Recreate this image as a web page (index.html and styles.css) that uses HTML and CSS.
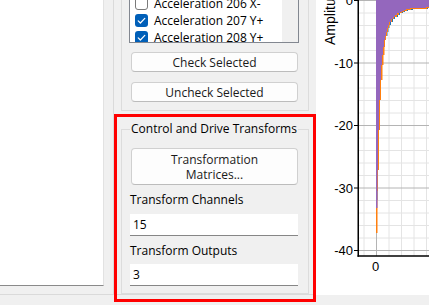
FILE: index.html
```html
<!DOCTYPE html>
<html>
<head>
<meta charset="utf-8">
<link rel="stylesheet" href="styles.css">
</head>
<body>
<div class="app">
  <div class="workspace">
    <div class="left-pane">
      <div class="tree"></div>
    </div>
    <div class="sidebar">
      <div class="group group-channels">
        <div class="listbox">
          <div class="list-items">
            <div class="item"><span class="cb"></span><span>Acceleration 206 X-</span></div>
            <div class="item"><span class="cb checked"><svg viewBox="0 0 13 13" width="13" height="13"><path d="M3.2 6.8 L5.4 9 L9.8 4.4" fill="none" stroke="#fff" stroke-width="1.2" stroke-linecap="round" stroke-linejoin="round"/></svg></span><span>Acceleration 207 Y+</span></div>
            <div class="item"><span class="cb checked"><svg viewBox="0 0 13 13" width="13" height="13"><path d="M3.2 6.8 L5.4 9 L9.8 4.4" fill="none" stroke="#fff" stroke-width="1.2" stroke-linecap="round" stroke-linejoin="round"/></svg></span><span>Acceleration 208 Y+</span></div>
          </div>
          <div class="scrolltrack"></div>
        </div>
        <button class="btn">Check Selected</button>
        <button class="btn btn-gap">Uncheck Selected</button>
      </div>
      <fieldset class="group group-transforms">
        <legend>Control and Drive Transforms</legend>
        <button class="btn btn-tall">Transformation<br>Matrices...</button>
        <label class="field-label">Transform Channels</label>
        <input class="field field-first" type="text" value="15">
        <label class="field-label">Transform Outputs</label>
        <input class="field field-second" type="text" value="3">
      </fieldset>
    </div>
    <div class="plot">
      <svg class="chart" width="113" height="295" viewBox="0 0 113 295">
        <g stroke="#e4e4e4" stroke-width="1">
          <line x1="42" y1="13" x2="113" y2="13"/>
          <line x1="42" y1="25.5" x2="113" y2="25.5"/>
          <line x1="42" y1="38" x2="113" y2="38"/>
          <line x1="42" y1="50.5" x2="113" y2="50.5"/>
          <line x1="42" y1="75.5" x2="113" y2="75.5"/>
          <line x1="42" y1="88" x2="113" y2="88"/>
          <line x1="42" y1="100.5" x2="113" y2="100.5"/>
          <line x1="42" y1="113" x2="113" y2="113"/>
          <line x1="42" y1="138" x2="113" y2="138"/>
          <line x1="42" y1="150.5" x2="113" y2="150.5"/>
          <line x1="42" y1="163" x2="113" y2="163"/>
          <line x1="42" y1="175.5" x2="113" y2="175.5"/>
          <line x1="42" y1="200.5" x2="113" y2="200.5"/>
          <line x1="42" y1="213" x2="113" y2="213"/>
          <line x1="42" y1="225.5" x2="113" y2="225.5"/>
          <line x1="42" y1="238" x2="113" y2="238"/>
          <line x1="48" y1="0" x2="48" y2="256"/>
          <line x1="73" y1="0" x2="73" y2="256"/>
          <line x1="85.5" y1="0" x2="85.5" y2="256"/>
          <line x1="98" y1="0" x2="98" y2="256"/>
          <line x1="110.5" y1="0" x2="110.5" y2="256"/>
        </g>
        <g stroke="#b4b4b4" stroke-width="1">
          <line x1="42" y1="0.5" x2="113" y2="0.5"/>
          <line x1="42" y1="63" x2="113" y2="63"/>
          <line x1="42" y1="125.5" x2="113" y2="125.5"/>
          <line x1="42" y1="188" x2="113" y2="188"/>
          <line x1="42" y1="250.5" x2="113" y2="250.5"/>
          <line x1="60.5" y1="0" x2="60.5" y2="256"/>
        </g>
        <path fill="#1f77b4" d="M60,0 H113 V8 H112 V9 H97 V10 H92 V11 H89 V12 H87 V13 H84 V15 H82 V17 H79 V19 H77 V22 H75 V25 H73.5 V28 H72.5 V32 H71.5 V36 H70 V40 H69 V47 H67.5 V55 H66.5 V65 H65.5 V80 H64.5 V100 H63.5 V130 H62.5 V150 H61.5 V200 H60 Z"/>
        <path fill="#ff7f0e" d="M60,0 H113 V8 H111 V9 H95 V10 H91 V11 H88 V12 H86 V13 H83 V15 H81 V17 H78 V19 H76 V22 H74 V25 H73 V28 H72 V32 H71 V36 H70 V40 H69 V47 H68.5 V55 H67.5 V65 H66.5 V80 H65 V100 H64 V130 H63 V170 H62 V191 H61.5 V233 H60 Z"/>
        <path fill="#9467bd" d="M60,0 H113 V7 H110 V8 H94 V9 H90 V10 H88 V11 H86 V12 H84 V13 H81 V15 H79 V17 H77 V19 H75 V22 H73 V25 H72 V28 H71 V32 H70 V36 H69 V40 H68 V47 H67 V55 H66 V65 H65 V80 H64 V100 H63 V130 H62 V170 H61.5 V208 H60 Z"/>
        <g stroke="#000" stroke-width="1">
          <line x1="38" y1="0.5" x2="42" y2="0.5"/>
          <line x1="38" y1="63" x2="42" y2="63"/>
          <line x1="38" y1="125.5" x2="42" y2="125.5"/>
          <line x1="38" y1="188" x2="42" y2="188"/>
          <line x1="38" y1="250.5" x2="42" y2="250.5"/>
        </g>
        <g stroke="#000" stroke-width="1.5">
          <line x1="42.25" y1="0" x2="42.25" y2="256.75"/>
          <line x1="41.5" y1="256" x2="113" y2="256"/>
        </g>
        <g class="tick" text-anchor="end">
          <text x="37" y="5.2">0</text>
          <text x="37" y="67.7">-10</text>
          <text x="37" y="130.2">-20</text>
          <text x="37" y="192.7">-30</text>
          <text x="37" y="255.2">-40</text>
        </g>
        <text class="tick" x="59.5" y="270.7" text-anchor="middle">0</text>
        <text class="axis-title" transform="translate(19,45) rotate(-90)">Amplitude</text>
      </svg>
    </div>
  </div>
  <div class="statusbar"></div>
  <div class="highlight"></div>
</div>
</body>
</html>
```

FILE: styles.css
```css
html, body {
  margin: 0;
  padding: 0;
}

body {
  width: 429px;
  height: 305px;
  overflow: hidden;
  background: #f0f0f0;
  font-family: "Segoe UI", "Open Sans", "Noto Sans", sans-serif;
  font-size: 12px;
  color: #1a1a1a;
}

.app {
  position: relative;
  width: 429px;
  height: 305px;
  display: flex;
  flex-direction: column;
}

.workspace {
  display: flex;
  height: 295px;
  flex: none;
}

.left-pane {
  width: 113px;
  flex: none;
  border-bottom: 1px solid #dadada;
  box-sizing: border-box;
}

.tree {
  width: 104px;
  height: 286px;
  box-sizing: border-box;
  background: #fff;
  border-right: 1px solid #e2e2e2;
  border-bottom: 1px solid #8a8a8a;
}

.sidebar {
  width: 203px;
  flex: none;
  box-sizing: border-box;
  border-left: 1px solid #dadada;
  border-bottom: 1px solid #dadada;
  padding-left: 7px;
  overflow: hidden;
}

.group {
  width: 188px;
  box-sizing: border-box;
  border: 1px solid #dcdcdc;
  margin: 0;
  padding: 0 9px 8px 8px;
}

.group-channels {
  margin-top: -8px;
}

.listbox {
  display: flex;
  height: 50px;
  margin-left: -1px;
  box-sizing: border-box;
  border: 1px solid #828790;
  background: #fff;
  overflow: hidden;
}

.list-items {
  flex: 1;
  margin-top: 1px;
}

.item {
  display: flex;
  align-items: center;
  height: 17px;
  white-space: nowrap;
  color: #000;
}

.cb {
  width: 13px;
  height: 13px;
  box-sizing: border-box;
  margin-left: 5px;
  margin-right: 6px;
  border: 1px solid #7a7a7a;
  border-radius: 3px;
  background: #fff;
  flex: none;
  display: flex;
}

.cb.checked {
  border: none;
  background: #005fb8;
}

.scrolltrack {
  width: 16px;
  flex: none;
  background: #f0f0f0;
}

.btn {
  display: block;
  width: 167px;
  height: 20px;
  margin: 9px 0 0 1px;
  padding: 0;
  box-sizing: border-box;
  border: 1px solid #d0d0d0;
  border-bottom-color: #bcbcbc;
  border-radius: 4px;
  background: #fdfdfd;
  font-family: inherit;
  font-size: 12px;
  color: #1a1a1a;
  line-height: 17px;
}

.btn-gap {
  margin-top: 10px;
}

.group-transforms {
  margin-top: 10px;
  padding-bottom: 7px;
}

.group-transforms legend {
  padding: 0 1px;
  margin-left: 0;
  line-height: 16px;
  color: #000;
}

.btn-tall {
  height: 37px;
  margin-top: 11px;
  line-height: 15px;
}

.field-label {
  display: block;
  line-height: 16px;
  margin-top: 7px;
  color: #000;
}

.field {
  display: block;
  width: 168px;
  height: 22px;
  margin: 0;
  padding: 0 3px;
  box-sizing: border-box;
  border: none;
  border-bottom: 1px solid #868686;
  background: #fff;
  font-family: inherit;
  font-size: 12px;
  color: #000;
  outline: none;
}

.field-first {
  margin-top: 6px;
}

.field-second {
  margin-top: 5px;
}

.plot {
  flex: 1;
  background: #fff;
  overflow: hidden;
}

.chart {
  display: block;
}

.tick {
  font-family: "Liberation Sans", Arial, sans-serif;
  font-size: 13px;
  fill: #000;
}

.axis-title {
  font-family: "Liberation Sans", Arial, sans-serif;
  font-size: 14px;
  fill: #000;
}

.statusbar {
  flex: 1;
  background: #f0f0f0;
}

.highlight {
  position: absolute;
  left: 114px;
  top: 114px;
  width: 202px;
  height: 188px;
  box-sizing: border-box;
  border: 3px solid #ff0000;
  pointer-events: none;
}
```
